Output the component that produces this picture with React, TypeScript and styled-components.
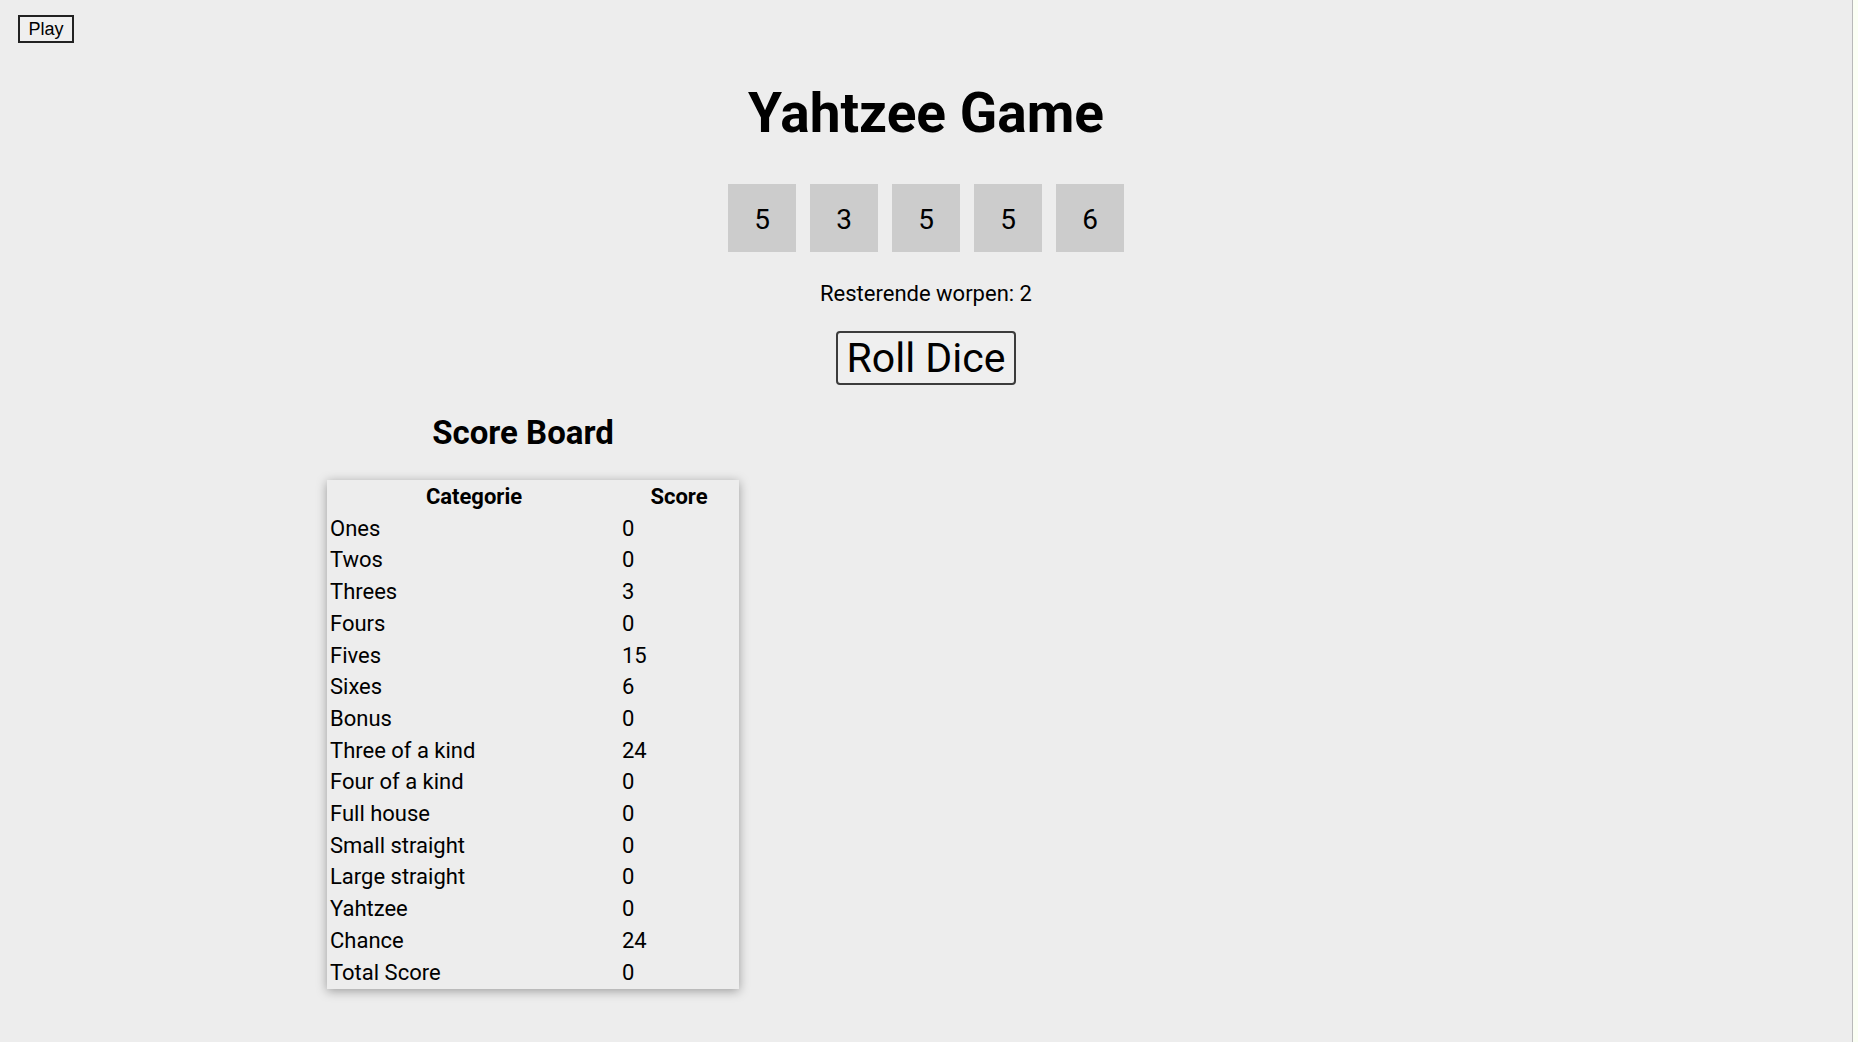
import React from "react"
import styled, { createGlobalStyle } from "styled-components"

const GlobalStyle = createGlobalStyle`
    html, body {
        margin: 0;
        padding: 0;
        background: #fbfff4;
    }
    body {
        font-family: Roboto, "Liberation Sans", Arial, sans-serif;
        color: #000;
    }
`;

export const Page = styled.div `
    box-sizing: border-box;
    width: 1853px;
    min-height: 100vh;
    border-right: 1px solid #b9b9b9;
    background: #ededed;
    padding: 15px 0 40px;
    display: flex;
    flex-direction: column;
`;
export const PlayButton = styled.button `
    align-self: flex-start;
    margin-left: 18px;
    box-sizing: border-box;
    width: 56px;
    height: 28px;
    padding: 0;
    border: 2px solid #222;
    background: #efefef;
    font-family: "Liberation Sans", Arial, sans-serif;
    font-size: 18px;
    line-height: 22px;
    color: #000;
`;
export const Game = styled.main `
    display: flex;
    flex-direction: column;
    align-items: center;
`;
export const Title = styled.h1 `
    margin: 37px 0 0;
    font-size: 55px;
    line-height: 66px;
    font-weight: 700;
`;
export const DiceRow = styled.div `
    display: flex;
    gap: 14px;
    margin-top: 38px;
`;
export const Die = styled.div `
    box-sizing: border-box;
    width: 68px;
    height: 68px;
    padding-top: 2px;
    background: #cccccc;
    display: flex;
    align-items: center;
    justify-content: center;
    font-size: 28px;
`;
export const Rolls = styled.p `
    margin: 29px 0 0;
    font-size: 22px;
    line-height: 26px;
`;
export const RollButton = styled.button `
    margin-top: 24px;
    box-sizing: border-box;
    height: 54px;
    padding: 0 9px;
    border: 2px solid #3c3c3c;
    border-radius: 4px;
    background: #efefef;
    font-family: Roboto, sans-serif;
    font-size: 41px;
    line-height: 50px;
    color: #000;
`;
export const Board = styled.section `
    align-self: flex-start;
    margin-left: 327px;
    width: 412px;
    margin-top: 28px;
`;
export const BoardTitle = styled.h2 `
    margin: 0;
    padding-right: 20px;
    text-align: center;
    font-size: 33px;
    line-height: 40px;
    font-weight: 700;
`;
export const ScoreTable = styled.table `
    margin-top: 27px;
    width: 412px;
    table-layout: fixed;
    border-spacing: 2px;
    box-shadow: 0 2px 10px rgba(0, 0, 0, 0.35);
    font-size: 22px;
    line-height: 25.7px;
`;
export const HeadCell = styled.th<{ $w: number }> `
    width: ${p => p.$w}px;
    padding: 2px 1px;
    font-weight: 700;
    text-align: center;
`;
export const Cell = styled.td `
    padding: 2px 1px;
    text-align: left;
`;

const dice = [5, 3, 5, 5, 6]

const scores: [string, number][] = [
    ["Ones", 0],
    ["Twos", 0],
    ["Threes", 3],
    ["Fours", 0],
    ["Fives", 15],
    ["Sixes", 6],
    ["Bonus", 0],
    ["Three of a kind", 24],
    ["Four of a kind", 0],
    ["Full house", 0],
    ["Small straight", 0],
    ["Large straight", 0],
    ["Yahtzee", 0],
    ["Chance", 24],
    ["Total Score", 0],
]

const App = () => {
    return (
      <>
        <GlobalStyle />
        <Page>
            <PlayButton type="button">Play</PlayButton>
            <Game>
                <Title>Yahtzee Game</Title>
                <DiceRow>
                    {dice.map((d, i) => <Die key={i}>{d}</Die>)}
                </DiceRow>
                <Rolls>Resterende worpen: 2</Rolls>
                <RollButton type="button">Roll Dice</RollButton>
                <Board>
                    <BoardTitle>Score Board</BoardTitle>
                    <ScoreTable>
                        <thead>
                            <tr>
                                <HeadCell $w={288}>Categorie</HeadCell>
                                <HeadCell $w={114}>Score</HeadCell>
                            </tr>
                        </thead>
                        <tbody>
                            {scores.map(([name, value]) => (
                                <tr key={name}>
                                    <Cell>{name}</Cell>
                                    <Cell>{value}</Cell>
                                </tr>
                            ))}
                        </tbody>
                    </ScoreTable>
                </Board>
            </Game>
        </Page>
      </>
    )
}

export default App
